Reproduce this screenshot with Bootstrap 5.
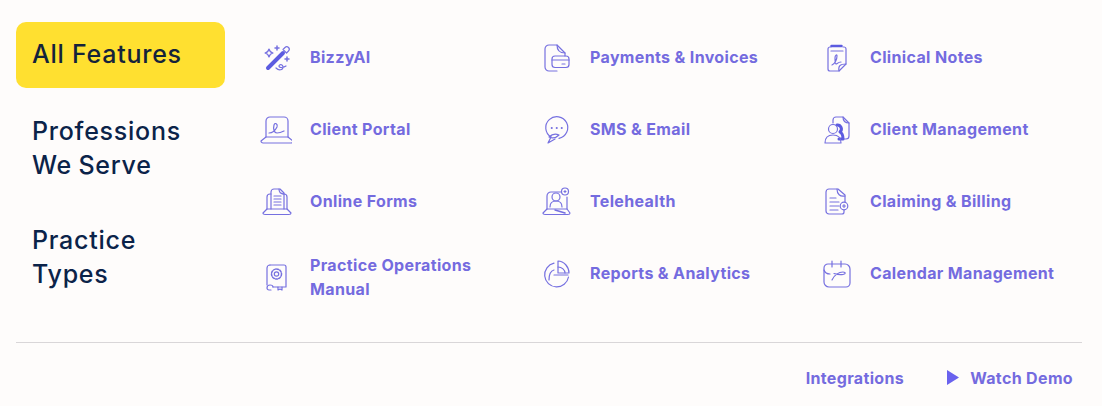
<!DOCTYPE html>
<html lang="en">
<head>
  <meta charset="UTF-8">
  <meta name="viewport" content="width=device-width, initial-scale=1">
  <title>Features menu</title>
  <link href="https://cdn.jsdelivr.net/npm/bootstrap@5.3.3/dist/css/bootstrap.min.css" rel="stylesheet">
  <style>
    body { background: #fefcfb; font-family: "Inter", "Liberation Sans", sans-serif; overflow: hidden; }
    .menu-wrap { width: 1102px; height: 406px; padding: 22px 20px 0 16px; }
    .menu-top { height: 320px; }
    .side-col { width: 209px; flex: none; }
    .side-link { display: block; padding: 0 16px; font-size: 25px; font-weight: 500; line-height: 34px; color: #0b2349; text-decoration: none; letter-spacing: .75px; }
    .side-link.is-active { background: #ffe030; border-radius: 10px; height: 66px; line-height: 65px; color: #14233b; }
    .side-prof { margin-top: 26px; word-spacing: -1px; }
    .side-prac { margin-top: 41px; }
    .feat-grid { display: grid; grid-template-columns: repeat(3, 280px); grid-auto-rows: 72px; margin-left: 35px; margin-top: -1px; }
    .feat-item { display: flex; align-items: center; color: #746bdf; font-size: 16px; font-weight: 700; line-height: 24px; letter-spacing: .35px; text-decoration: none; }
    .feat-item svg { width: 32px; height: 32px; flex: none; margin-right: 18px; fill: none; stroke: #7670e0; stroke-width: 1.2; stroke-linecap: round; stroke-linejoin: round; }
    .feat-item.is-tall { padding-top: 8px; }
    .feat-item.is-tall span { max-width: 180px; }
    .menu-foot { border-top: 1px solid #d9d6d8; height: 64px; gap: 43px; padding: 6px 9px 0 0; }
    .foot-link { color: #746bdf; font-size: 16px; font-weight: 700; letter-spacing: .35px; text-decoration: none; display: flex; align-items: center; }
    .foot-link svg { width: 12px; height: 15px; margin-right: 11px; fill: #6a62ee; }
  </style>
</head>
<body>

<div class="menu-wrap">
  <div class="menu-top d-flex">
    <div class="side-col">
      <a class="side-link is-active" href="#">All Features</a>
      <a class="side-link side-prof" href="#">Professions<br>We Serve</a>
      <a class="side-link side-prac" href="#">Practice<br>Types</a>
    </div>

    <div class="feat-grid">
      <a class="feat-item" href="#">
        <svg viewBox="0 0 32 32"><path d="M8 27 23 12" stroke="#5c5be0" stroke-width="4"/><path d="M23 8.500 26.500 12l2-2a2.300 2.300 0 0 0-3.500-3.500Z"/><path d="M9 8c.6 2.500 1.500 3.400 4 4-2.500.6-3.400 1.500-4 4-.6-2.500-1.500-3.400-4-4 2.500-.6 3.400-1.500 4-4Z"/><path d="M17 5v4M15 7h4M27 16v4M25 18h4" stroke-width="1.500"/><path d="M16 27c3 3 7 2 7-1 0-3-4-3-4-1s4 2 7 0"/></svg>
        <span>BizzyAI</span>
      </a>
      <a class="feat-item" href="#">
        <svg viewBox="0 0 32 32"><path d="M17 30H9a4 4 0 0 1-4-4V8a4 4 0 0 1 4-4h8l8 8v3"/><path d="M17 4c0 5 3 8 8 8"/><rect x="12" y="15" width="17" height="11.500" rx="3"/><path d="M12 19h17M22 23h3"/></svg>
        <span>Payments &amp; Invoices</span>
      </a>
      <a class="feat-item" href="#">
        <svg viewBox="0 0 32 32"><path d="M11 6h-1a2 2 0 0 0-2 2v20a2 2 0 0 0 2 2h9l7-7V8a2 2 0 0 0-2-2h-1"/><path d="M11.500 5h10" stroke="#5c5be0" stroke-width="2.500"/><path d="M11 10h12M19 30c-1-5 1-7 7-7"/><path d="M12 24c3-1 5-6 5-9 0-2-2-1-2 2s0 6 1 6 2-2 5-2"/></svg>
        <span>Clinical Notes</span>
      </a>

      <a class="feat-item" href="#">
        <svg viewBox="0 0 32 32"><path d="M6 24V8a4 4 0 0 1 4-4h14a4 4 0 0 1 4 4v16"/><path d="M1 28l5-4h22l5 4c0 1-1 2-2 2H3c-1 0-2-1-2-2Z"/><path d="M9 20c3 0 6-2 8-6 1-3-2-5-3-2-1 4 0 8 3 8s5-1 7-2"/></svg>
        <span>Client Portal</span>
      </a>
      <a class="feat-item" href="#">
        <svg viewBox="0 0 32 32"><path d="M11 24A11 11 0 1 1 19 25.400"/><path d="M11 24l-3 6 7-4"/><path d="M9 24c3-3 6-4 10-2-3 3-6 4-10 2Z"/><path d="M11.700 15h.1M16.700 15h.1M21.700 15h.1" stroke-width="2"/></svg>
        <span>SMS &amp; Email</span>
      </a>
      <a class="feat-item" href="#">
        <svg viewBox="0 0 32 32"><path d="M13 10V7a3 3 0 0 1 3-3h7l6 6v13a3 3 0 0 1-3 3h-3"/><path d="M23 4c0 4 2 6 6 6"/><path d="M17 12a4 4 0 0 1 3 7c2 1 3 4 3 7h-4" stroke="#5c5be0" stroke-width="3"/><circle cx="13" cy="16" r="4.500"/><path d="M5 30c0-5 3-8 8-8s8 3 8 8Z"/></svg>
        <span>Client Management</span>
      </a>

      <a class="feat-item" href="#">
        <svg viewBox="0 0 32 32"><path d="M7 24V12a3 3 0 0 1 3-3h1M27 24V12a3 3 0 0 0-3-3h-1"/><path d="M11 24V7a3 3 0 0 1 3-3h6l4 4v16"/><path d="M19 4c0 3 2 5 5 5"/><path d="M14 11h7M14 14h7M14 17h7M14 20h7"/><path d="M3 28l4-4h20l4 4c0 1-1 1.500-2 1.500H5c-1 0-2-.5-2-1.500Z"/></svg>
        <span>Online Forms</span>
      </a>
      <a class="feat-item" href="#">
        <svg viewBox="0 0 32 32"><path d="M7 24V11a4 4 0 0 1 4-4h10M27 12v12"/><path d="M3 28l4-4h20l3 4c0 1-1 1.500-2 1.500H5c-1 0-2-.5-2-1.500Z"/><circle cx="16" cy="12" r="4"/><path d="M10 22c0-4 2-6 6-6s6 2 6 6"/><path d="M15 25l10 3" stroke-width="1.500"/><circle cx="25" cy="6.500" r="3.500"/><path d="M25 5.500v2M24 6.500h2"/></svg>
        <span>Telehealth</span>
      </a>
      <a class="feat-item" href="#">
        <svg viewBox="0 0 32 32"><path d="M24 25v2a2 2 0 0 1-2 2H9a3 3 0 0 1-3-3V7a3 3 0 0 1 3-3h9l7 6v7"/><path d="M17 4c0 5 3 8 8 7"/><path d="M10 13h6M10 17h9M10 21h9M10 25h8"/><circle cx="24" cy="21" r="3.800"/><path d="M24 19.500v3M22.500 21h3"/></svg>
        <span>Claiming &amp; Billing</span>
      </a>

      <a class="feat-item is-tall" href="#">
        <svg viewBox="0 0 32 32"><path d="M10 4h14a2 2 0 0 1 2 2v20H18"/><path d="M7 24V7a3 3 0 0 1 3-3"/><path d="M11 29H9a2 2 0 0 1-2-2c0-2 1-3 3-3 2 0 3 1 3 2"/><path d="M13 26h5M18 26v3l2-1 2 1 0-3"/><circle cx="16.500" cy="13" r="2.200"/><circle cx="16.500" cy="13" r="5" stroke-dasharray="2 1.300" stroke-width="1.500"/></svg>
        <span>Practice Operations Manual</span>
      </a>
      <a class="feat-item" href="#">
        <svg viewBox="0 0 32 32"><path d="M14 6.200A12 12 0 1 0 28.500 20"/><path d="M9 23c0-5 1-9 5-10"/><path d="M18 4c6 0 11 6 11 12H18Z"/><path d="M14 18h14M18 10c4 0 7 3 7 6"/></svg>
        <span>Reports &amp; Analytics</span>
      </a>
      <a class="feat-item" href="#">
        <svg viewBox="0 0 32 32"><path d="M8 7h17a5 5 0 0 1 5 5v14a4 4 0 0 1-4 4H9a5 5 0 0 1-5-5V11a4 4 0 0 1 4-4Z"/><path d="M12 4v6M21 4v6"/><path d="M4 13c1 3 3 4 6 4"/><path d="M12 23c2-5 7-8 11-8 3 0 3 2 0 2.500-3 .5-6 0-9-1"/></svg>
        <span>Calendar Management</span>
      </a>
    </div>
  </div>

  <div class="menu-foot d-flex justify-content-end align-items-center">
    <a class="foot-link" href="#">Integrations</a>
    <a class="foot-link" href="#"><svg viewBox="0 0 12 15"><path d="M0 0 12 7.500 0 15Z"/></svg>Watch Demo</a>
  </div>
</div>

</body>
</html>
